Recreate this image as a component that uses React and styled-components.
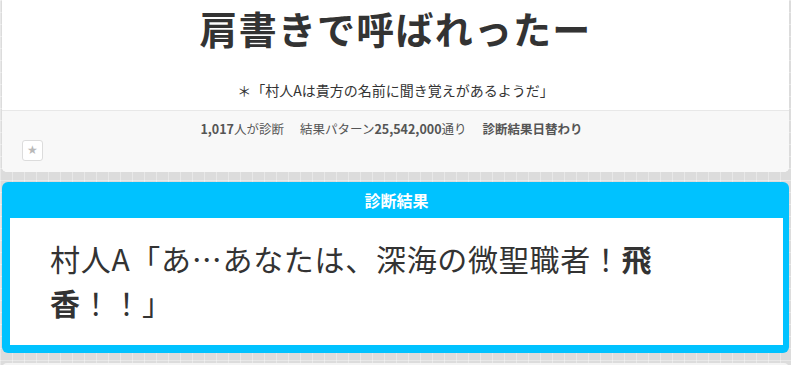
import React from "react";
import styled, { createGlobalStyle } from "styled-components";

const Global = createGlobalStyle`
  html, body { margin: 0; padding: 0; }
  body {
    background-color: #dcdcdc;
    background-image:
      linear-gradient(to right, rgba(255,255,255,0.35) 1px, transparent 1px),
      linear-gradient(to bottom, rgba(255,255,255,0.35) 1px, transparent 1px);
    background-size: 12px 12px;
    font-family: "Noto Sans CJK JP", "Noto Sans", sans-serif;
    color: #333;
  }
`;

const Page = styled.div`
  display: flex;
  flex-direction: column;
  gap: 10px;
  padding: 0 2px;
  width: 791px;
  box-sizing: border-box;
`;

const HeadCard = styled.section`
  background: #fff;
  border-radius: 0 0 5px 5px;
  overflow: hidden;
`;

const TitleArea = styled.div`
  display: flex;
  flex-direction: column;
  align-items: center;
  padding-bottom: 10px;
  border-bottom: 1px solid #e8e8e8;
`;

const Title = styled.h1`
  margin: 0;
  font-size: 38px;
  line-height: 56px;
  font-weight: 700;
  color: #333;
  letter-spacing: 1.2px;
`;

const Lead = styled.p`
  margin: 24px 0 0;
  font-size: 14px;
  line-height: 20px;
  color: #333;
`;

const InfoArea = styled.div`
  background: #f8f8f8;
  padding: 9px 20px 11px;
  display: flex;
  flex-direction: column;
`;

const Stats = styled.div`
  display: flex;
  justify-content: center;
  gap: 16px;
  padding-right: 8px;
  font-size: 12.5px;
  line-height: 18px;
  color: #555;
`;

const Stat = styled.span`
  font-weight: ${(p) => (p.$bold ? 700 : 400)};
  b { font-weight: 700; }
`;

const StarButton = styled.button`
  margin-top: 2px;
  width: 21px;
  height: 21px;
  padding: 0;
  border: 1px solid #dcdcdc;
  border-radius: 3px;
  background: #fff;
  color: #b8b8b8;
  font-size: 12px;
  line-height: 19px;
  display: flex;
  align-items: center;
  justify-content: center;
  font-family: "DejaVu Sans", sans-serif;
`;

const ResultBox = styled.section`
  background: #00c2ff;
  border-radius: 6px;
  padding: 0 6px 8px 8px;
  display: flex;
  flex-direction: column;
`;

const ResultHead = styled.h2`
  margin: 0;
  height: 36px;
  display: flex;
  align-items: center;
  justify-content: center;
  color: #fff;
  font-size: 16px;
  font-weight: 700;
`;

const ResultBody = styled.div`
  background: #fff;
  padding: 18px 40px 21px;
`;

const ResultText = styled.p`
  margin: 0;
  max-width: 616px;
  font-size: 30px;
  line-height: 44px;
  letter-spacing: 0.7px;
  color: #333;
  font-weight: 400;
  b { font-weight: 700; }
`;

const NextCard = styled.section`
  background: #f4f4f4;
  border-radius: 5px 5px 0 0;
  height: 40px;
`;

export default function App() {
  return (
    <>
      <Global />
      <Page>
        <HeadCard>
          <TitleArea>
            <Title>肩書きで呼ばれったー</Title>
            <Lead>＊「村人Aは貴方の名前に聞き覚えがあるようだ」</Lead>
          </TitleArea>
          <InfoArea>
            <Stats>
              <Stat><b>1,017</b>人が診断</Stat>
              <Stat>結果パターン<b>25,542,000</b>通り</Stat>
              <Stat $bold>診断結果日替わり</Stat>
            </Stats>
            <StarButton aria-label="お気に入り">★</StarButton>
          </InfoArea>
        </HeadCard>
        <ResultBox>
          <ResultHead>診断結果</ResultHead>
          <ResultBody>
            <ResultText>
              村人A「あ…あなたは、深海の微聖職者！<b>飛香</b>！！」
            </ResultText>
          </ResultBody>
        </ResultBox>
        <NextCard />
      </Page>
    </>
  );
}
